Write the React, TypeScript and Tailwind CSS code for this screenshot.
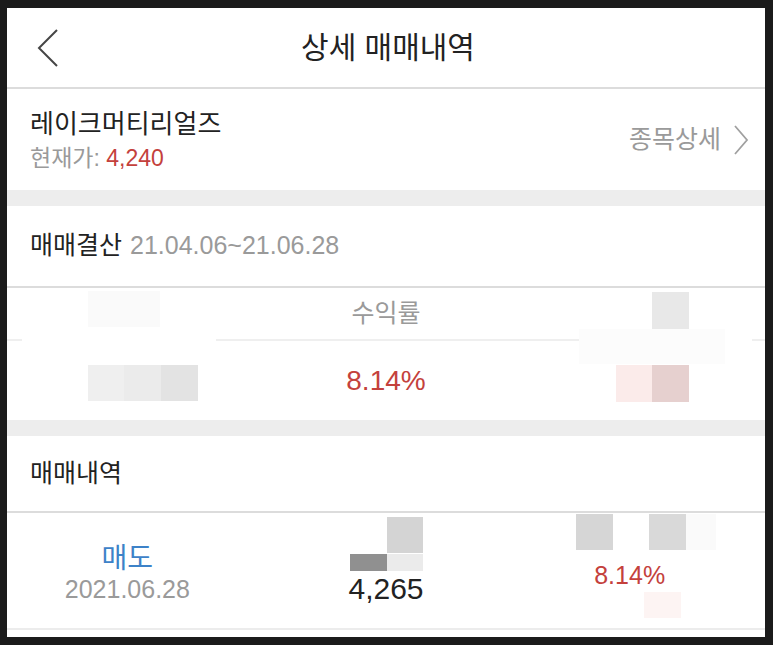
import React from 'react';

const FONT = { fontFamily: '"Liberation Sans", "Noto Sans CJK KR", sans-serif' };

// censor mosaic blocks laid over the summary / trade row
type Block = { x: number; y: number; w: number; h: number; c: string };

const summaryBlocks: Block[] = [
  { x: 15, y: 40, w: 194, h: 36, c: '#ffffff' },
  { x: 81, y: 3, w: 72, h: 36, c: '#fafafa' },
  { x: 81, y: 77, w: 36, h: 36, c: '#efefef' },
  { x: 117, y: 77, w: 37, h: 36, c: '#ebebeb' },
  { x: 154, y: 77, w: 37, h: 36, c: '#e3e3e3' },
  { x: 645, y: 4, w: 37, h: 37, c: '#e8e8e8' },
  { x: 572, y: 41, w: 146, h: 35, c: '#fcfcfc' },
  { x: 718, y: 41, w: 27, h: 35, c: '#ffffff' },
  { x: 609, y: 77, w: 36, h: 37, c: '#fbebea' },
  { x: 645, y: 77, w: 37, h: 37, c: '#e6d0cf' },
];

const rowBlocks: Block[] = [
  { x: 380, y: 4, w: 36, h: 36, c: '#d4d4d4' },
  { x: 343, y: 41, w: 37, h: 17, c: '#909090' },
  { x: 380, y: 41, w: 36, h: 17, c: '#ebebeb' },
  { x: 569, y: 1, w: 37, h: 36, c: '#d6d6d6' },
  { x: 642, y: 1, w: 37, h: 36, c: '#d9d9d9' },
  { x: 679, y: 1, w: 30, h: 36, c: '#fafafa' },
  { x: 637, y: 79, w: 37, h: 26, c: '#fdf4f3' },
];

function Mosaic({ blocks }: { blocks: Block[] }) {
  return (
    <>
      {blocks.map((b, i) => (
        <div
          key={i}
          className="absolute"
          style={{ left: b.x, top: b.y, width: b.w, height: b.h, background: b.c }}
        />
      ))}
    </>
  );
}

export default function App() {
  return (
    <div className="w-[773px] h-[645px] bg-[#1b1b1b] pt-[8px] pl-[7px] pr-[8px] pb-[8px]" style={FONT}>
      <div className="h-full bg-white flex flex-col overflow-hidden">
        {/* header */}
        <div className="relative h-[81px] shrink-0 flex items-center justify-center border-b-2 border-[#dcdcdc]">
          <svg className="absolute left-[29px] top-[20px]" width="24" height="40" viewBox="0 0 24 40" fill="none">
            <path d="M21 2 L3 20 L21 38" stroke="#454545" strokeWidth="2" />
          </svg>
          <h1 className="text-[30px] leading-[40px] text-[#222] ml-[4px]">상세 매매내역</h1>
        </div>

        {/* stock */}
        <div className="h-[101px] shrink-0 flex items-center justify-between pl-[23px] pr-[16px]">
          <div className="flex flex-col">
            <span className="text-[26px] leading-[34px] text-[#222]">레이크머티리얼즈</span>
            <span className="text-[23px] leading-[30px] mt-[2px] text-[#9a9a9a]">
              현재가: <span className="text-[#c4413c]">4,240</span>
            </span>
          </div>
          <div className="flex items-center gap-[12px] text-[#9a9a9a]">
            <span className="text-[25px]">종목상세</span>
            <svg width="16" height="30" viewBox="0 0 16 30" fill="none">
              <path d="M2 1 L14 15 L2 29" stroke="#a0a0a0" strokeWidth="1.8" />
            </svg>
          </div>
        </div>

        <div className="h-[16px] shrink-0 bg-[#ededed]" />

        {/* settlement */}
        <div className="h-[82px] shrink-0 flex items-center pl-[23px] border-b-2 border-[#dcdcdc]">
          <span className="text-[25px] text-[#222]">매매결산</span>
          <span className="text-[25px] text-[#9a9a9a] ml-[8px]">21.04.06~21.06.28</span>
        </div>

        <div className="relative h-[132px] shrink-0 flex flex-col">
          <div className="h-[53px] flex items-center justify-center border-b-2 border-[#efefef]">
            <span className="text-[25px] text-[#9a9a9a]">수익률</span>
          </div>
          <div className="flex-1 flex items-center justify-center">
            <span className="text-[28px] text-[#c4413c]">8.14%</span>
          </div>
          <Mosaic blocks={summaryBlocks} />
        </div>

        <div className="h-[16px] shrink-0 bg-[#ededed]" />

        {/* trades */}
        <div className="h-[77px] shrink-0 flex items-center pl-[23px] border-b-2 border-[#dcdcdc]">
          <span className="text-[25px] text-[#222]">매매내역</span>
        </div>

        <div className="relative h-[117px] shrink-0 grid grid-cols-3 border-b-2 border-[#ececec]">
          <div className="flex flex-col items-center pt-[30px] pr-[12px]">
            <span className="text-[28px] leading-[32px] text-[#3d82c8]">매도</span>
            <span className="text-[25px] leading-[30px] mt-[-1px] text-[#9a9a9a]">2021.06.28</span>
          </div>
          <div className="flex flex-col items-center pt-[59px]">
            <span className="text-[30px] leading-[34px] text-[#222]">4,265</span>
          </div>
          <div className="flex flex-col items-center pt-[48px] pr-[18px]">
            <span className="text-[25px] leading-[28px] text-[#c4413c]">8.14%</span>
          </div>
          <Mosaic blocks={rowBlocks} />
        </div>
      </div>
    </div>
  );
}
